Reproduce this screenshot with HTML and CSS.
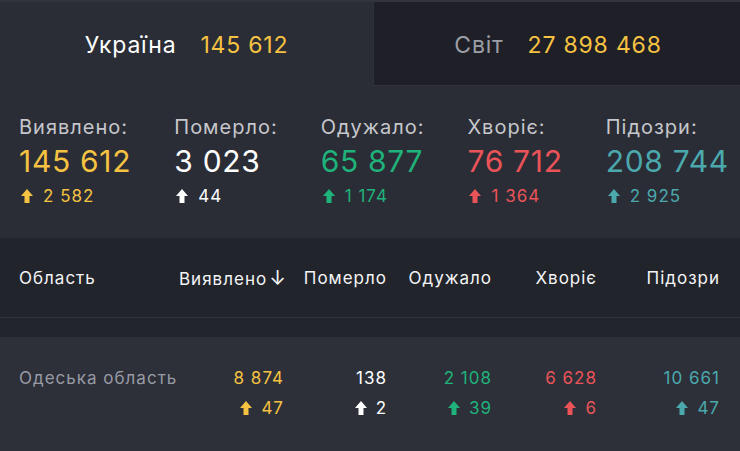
FILE: index.html
```html
<!DOCTYPE html>
<html lang="uk">
<head>
<meta charset="utf-8">
<link rel="stylesheet" href="styles.css">
</head>
<body>
<svg width="0" height="0" class="defs">
  <defs>
    <symbol id="up" viewBox="0 0 12 14"><path d="M6 0 L12 7 L8.5 7 L8.5 14 L3.5 14 L3.5 7 L0 7 Z" fill="currentColor"/></symbol>
  </defs>
</svg>
<div class="tabs">
  <div class="tab active"><span class="tab-label">Україна</span><span class="tab-num">145 612</span></div>
  <div class="tab"><span class="tab-label">Світ</span><span class="tab-num">27 898 468</span></div>
</div>
<div class="stats">
  <div class="stat yellow"><div class="s-label">Виявлено:</div><div class="s-num">145 612</div><div class="s-delta"><svg class="arr"><use href="#up"/></svg>2 582</div></div>
  <div class="stat white"><div class="s-label">Померло:</div><div class="s-num">3 023</div><div class="s-delta"><svg class="arr"><use href="#up"/></svg>44</div></div>
  <div class="stat green"><div class="s-label">Одужало:</div><div class="s-num">65 877</div><div class="s-delta"><svg class="arr"><use href="#up"/></svg>1 174</div></div>
  <div class="stat red"><div class="s-label">Хворіє:</div><div class="s-num">76 712</div><div class="s-delta"><svg class="arr"><use href="#up"/></svg>1 364</div></div>
  <div class="stat teal"><div class="s-label">Підозри:</div><div class="s-num">208 744</div><div class="s-delta"><svg class="arr"><use href="#up"/></svg>2 925</div></div>
</div>
<div class="thead">
  <div class="th left">Область</div>
  <div class="th">Виявлено<span class="sort">↓</span></div>
  <div class="th">Померло</div>
  <div class="th">Одужало</div>
  <div class="th">Хворіє</div>
  <div class="th">Підозри</div>
</div>
<div class="spacer"></div>
<div class="trow">
  <div class="td left region">Одеська область</div>
  <div class="td yellow"><div>8 874</div><div class="d"><svg class="arr sm"><use href="#up"/></svg>47</div></div>
  <div class="td white"><div>138</div><div class="d"><svg class="arr sm"><use href="#up"/></svg>2</div></div>
  <div class="td green"><div>2 108</div><div class="d"><svg class="arr sm"><use href="#up"/></svg>39</div></div>
  <div class="td red"><div>6 628</div><div class="d"><svg class="arr sm"><use href="#up"/></svg>6</div></div>
  <div class="td teal"><div>10 661</div><div class="d"><svg class="arr sm"><use href="#up"/></svg>47</div></div>
</div>
</body>
</html>
```
FILE: styles.css
```css
* { box-sizing: border-box; }
html, body { margin: 0; padding: 0; }
body {
  background: #2a2d35;
  font-family: Inter, "Noto Sans", sans-serif;
  color: #fff;
  width: 740px;
  height: 451px;
  overflow: hidden;
  letter-spacing: 1px;
}
.defs { position: absolute; }
.yellow { color: #f5c242; }
.white { color: #ffffff; }
.green { color: #1fb27a; }
.red { color: #ea5459; }
.teal { color: #4ba9ae; }

.tabs {
  display: flex;
  height: 86px;
  border-top: 2px solid #31343c;
}
.tab {
  flex: 0 0 373px;
  display: flex;
  align-items: center;
  justify-content: center;
  gap: 24px;
  font-size: 23px;
  letter-spacing: 0.8px;
  padding-top: 2px;
}
.tab + .tab {
  flex: 1;
  background: #1f2027;
  border-left: 1px solid #2f3239;
  border-bottom: 1px solid #2f3239;
  padding-left: 2px;
}
.tab-label { color: #fff; }
.tab + .tab .tab-label { color: #9c9ea6; }
.tab-num { color: #f5c242; }

.stats {
  display: flex;
  gap: 43px;
  padding: 27px 0 0 19px;
  height: 152px;
}
.stat { flex: none; white-space: nowrap; }
.s-label {
  color: #c6c7cc;
  font-size: 20px;
  line-height: 28px;
}
.s-num {
  font-size: 30px;
  line-height: 38px;
  margin-top: 1px;
  letter-spacing: 0.7px;
}
.s-delta {
  font-size: 17px;
  line-height: 24px;
  margin-top: 4px;
  display: flex;
  align-items: center;
}
.arr {
  width: 12px;
  height: 14px;
  margin: 0 10px 0 2px;
}
.stat.white .s-delta { color: #fff; }

.thead, .trow {
  display: grid;
  grid-template-columns: 160px 105px 103px 105px 105px 123px;
  padding: 0 20px 0 19px;
}
.thead {
  background: #22242b;
  height: 80px;
  align-items: center;
  border-bottom: 1px solid #30333b;
  font-size: 17px;
  font-weight: 400;
  color: #f4f4f6;
}
.th { text-align: right; white-space: nowrap; }
.th.left, .td.left { text-align: left; }
.sort { font-size: 20px; margin-left: 2px; font-weight: 400; letter-spacing: 0; }
.spacer { height: 19px; background: #23252c; }
.trow {
  background: #2d3038;
  height: 114px;
  padding-top: 29px;
  font-size: 17px;
}
.td { text-align: right; line-height: 24px; white-space: nowrap; }
.td .d {
  margin-top: 6px;
  display: flex;
  justify-content: flex-end;
  align-items: center;
}
.arr.sm { margin: 0 9px 0 0; }
.region { color: #989aa6; }
```
